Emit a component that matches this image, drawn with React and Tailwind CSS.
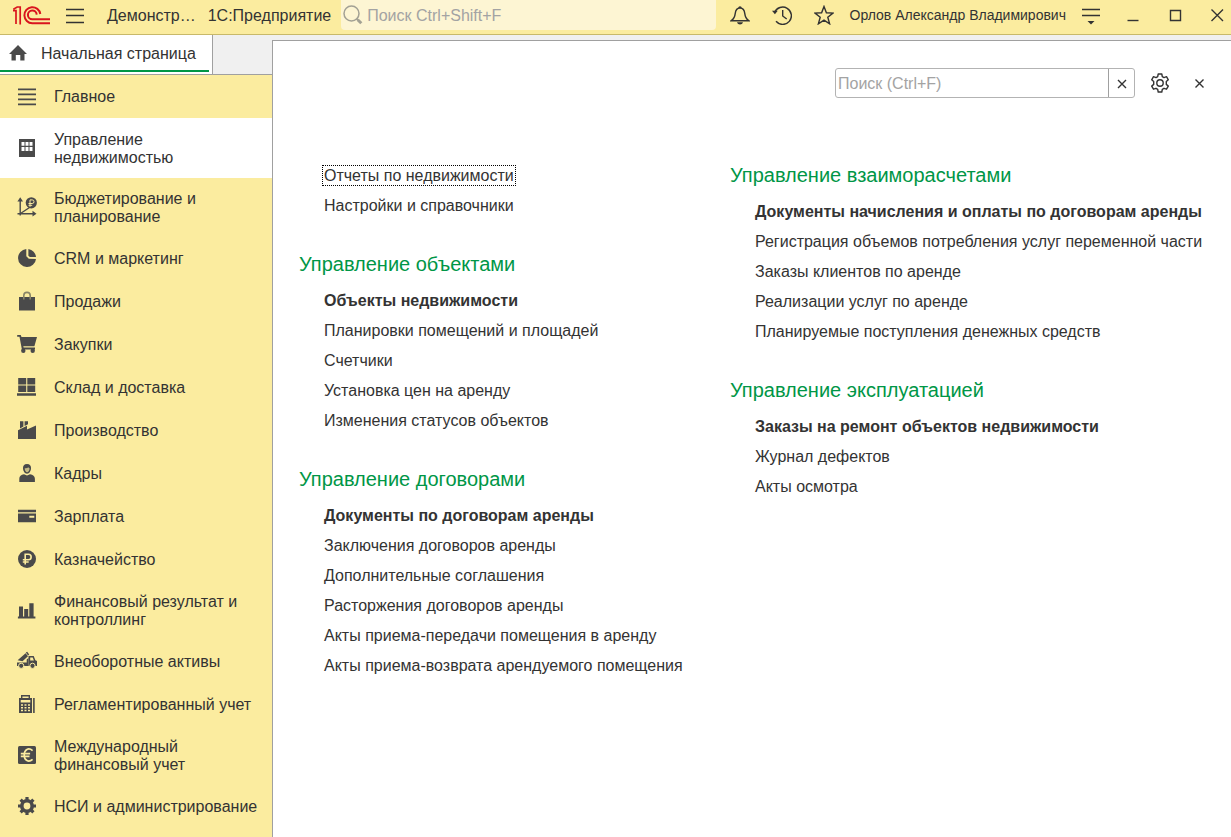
const ink = '#4a4a4a';

const icons = {
  main: (
    <path d="M1 2.5h18v1.8H1zM1 7.500h18v1.8H1zM1 12.500h18v1.8H1zM1 17.500h18v1.8H1z" />
  ),
  building: (
    <path
      fillRule="evenodd"
      d="M2 1h16v18H2zM4.500 4v3.800h3V4zM8.500 4v3.800h3V4zM12.500 4v3.800h3V4zM4.500 9v4h3V9zM8.500 9v4h3V9zM12.500 9v4h3V9z"
    />
  ),
  budget: (
    <>
      <path d="M3.2 18.5V2.5M.5 16.7h17M3.5 16.5l9-6" fill="none" stroke={ink} strokeWidth="1.4" />
      <path d="M.4 4.5 3.2.3 6 4.5zM15.5 13.8l4 2.9-4 2.9z" />
      <circle cx="14.3" cy="5.8" r="5.6" />
      <path d="M13 9.8V2.9h2.2a1.7 1.7 0 0 1 0 3.6h-3.7M11.5 8.3h3.7" fill="none" stroke="#fbec9f" />
    </>
  ),
  pie: (
    <>
      <path d="M9.3 1a9 9 0 1 0 9.7 9.900l-7.2-.1-2.5-2.5z" />
      <path d="M11.4.9A9 9 0 0 1 19 9.1h-6.2l-1.4-1.4z" />
    </>
  ),
  bag: (
    <>
      <path d="M2 6h16v13.5H2z" />
      <path d="M6.8 8.5V4.6a3.2 3.2 0 0 1 6.4 0v3.9" fill="none" stroke="#8a8567" strokeWidth="1.6" />
    </>
  ),
  cart: (
    <>
      <path d="M.2 1h3.500l.8 2h15.500l-2.600 9.300H6.300l.3 1.200H18v1.900H4.900L2.500 2.800H.2z" />
      <circle cx="6.3" cy="16.800" r="2.200" />
      <circle cx="15.7" cy="16.800" r="2.200" />
    </>
  ),
  stock: (
    <path d="M1.2 1h8v6.5h-8zM10.3 1h7.9v6.5h-7.9zM1.2 8.6h8v6.3h-8zM10.3 8.6h7.9v6.3h-7.9zM0 16.3h19v2.4H0z" />
  ),
  factory: (
    <path d="M3 1.2h3.4v5.3L3 8.4zM7.6 1.2H11v3L7.6 6zM1 10.2l9-4.5v3.9l9-4.2V19H1z" />
  ),
  person: (
    <>
      <path d="M10 .9c3 0 4 2 4 4.2 0 3-1.7 5.7-4 5.7S6 8.100 6 5.100C6 2.900 7 .9 10 .9z" />
      <path d="M7.700 5.300c1.800 0 3-.4 3.700-1.100.4.6.700.9 1.200 1.100 0 2.100-1.200 4-2.500 4S7.700 7.400 7.700 5.300z" fill="#c4ba83" />
      <path d="M2.300 19v-3.300c0-2.500 1.700-4 4.700-4.500l3 1.300 3-1.300c3 .5 4.900 2 4.900 4.500V19z" />
    </>
  ),
  card: (
    <path fillRule="evenodd" d="M1 3.800h18v2.500H1zM1 7.600h18v8.700H1zM12.300 9.800v1.900h5V9.800z" />
  ),
  ruble: (
    <>
      <circle cx="10" cy="10" r="9" />
      <path d="M8.200 15.500V5.200h3.200a2.700 2.700 0 0 1 0 5.500H5.800M5.800 13h5.900" fill="none" stroke="#fbec9f" strokeWidth="1.600" />
    </>
  ),
  bars: <path d="M2 6.500h4V17H2zM7.200 9h4v8h-4zM12.300 3.300h4.300V17h-4.300zM.9 16.600h17.500v1.800H.9z" />,
  truck: (
    <>
      <path d="M.6 9.200 8.600 2.200l2.400 3-5.500 5zM0 11.500h9.700V8.600L11.500 7v8H0z" />
      <path fillRule="evenodd" d="M11.500 5h5.200l1.700 4.200 1.600.8v5h-8.500zM13.200 6.400v3.200h3.700l-1.200-3.200z" />
      <path d="m8.800 1.600 1.400-.9 2 2.700-1.100 1.200z" />
      <circle cx="4.200" cy="14.800" r="2.600" stroke="#fbec9f" />
      <circle cx="15.500" cy="14.800" r="2.600" stroke="#fbec9f" />
    </>
  ),
  register: (
    <>
      <path fillRule="evenodd" d="M4 1h9v3h2v15H2V4h2zM5.400 2.400V4h6.200V2.400zM3.700 6v2.400h9.600V6zM4 10.200v1.500h2v-1.500zM7.500 10.200v1.500h2v-1.500zM11 10.200v1.500h2v-1.500zM4 13v1.500h2V13zM7.500 13v1.500h2V13zM11 13v1.500h2V13zM4 15.800v1.500h2v-1.500zM7.500 15.800v1.500h2v-1.500zM11 15.800v1.500h2v-1.500z" />
      <path d="M16.100 4h1.600v15h-1.600z" />
    </>
  ),
  euro: (
    <>
      <rect x="1" y="1" width="18" height="18" rx="1.500" />
      <path d="M15.600 5.600c-4-3.400-8.400-1.200-8.400 4.400s4.400 7.800 8.400 4.400M3.800 8.600h9.300M3.800 11.400h8.700" fill="none" stroke="#fbec9f" strokeWidth="1.700" />
    </>
  ),
  gear: (
    <>
      <circle cx="10" cy="10" r="5.200" fill="none" stroke={ink} strokeWidth="3.600" />
      <path
        d="M10 1v3M10 16v3M1 10h3M16 10h3M3.600 3.600l2.200 2.200M14.200 14.200l2.200 2.200M3.600 16.400l2.200-2.200M14.200 5.800l2.200-2.200"
        stroke={ink}
        strokeWidth="3.200"
      />
    </>
  ),
};

const sections = [
  { icon: 'main', title: 'Главное' },
  { icon: 'building', title: 'Управление недвижимостью', active: true },
  { icon: 'budget', title: 'Бюджетирование и планирование' },
  { icon: 'pie', title: 'CRM и маркетинг' },
  { icon: 'bag', title: 'Продажи' },
  { icon: 'cart', title: 'Закупки' },
  { icon: 'stock', title: 'Склад и доставка' },
  { icon: 'factory', title: 'Производство' },
  { icon: 'person', title: 'Кадры' },
  { icon: 'card', title: 'Зарплата' },
  { icon: 'ruble', title: 'Казначейство' },
  { icon: 'bars', title: 'Финансовый результат и контроллинг' },
  { icon: 'truck', title: 'Внеоборотные активы' },
  { icon: 'register', title: 'Регламентированный учет' },
  { icon: 'euro', title: 'Международный финансовый учет' },
  { icon: 'gear', title: 'НСИ и администрирование' },
];

const leftGroups = [
  {
    title: 'Управление объектами',
    items: [
      'Объекты недвижимости',
      'Планировки помещений и площадей',
      'Счетчики',
      'Установка цен на аренду',
      'Изменения статусов объектов',
    ],
  },
  {
    title: 'Управление договорами',
    items: [
      'Документы по договорам аренды',
      'Заключения договоров аренды',
      'Дополнительные соглашения',
      'Расторжения договоров аренды',
      'Акты приема-передачи помещения в аренду',
      'Акты приема-возврата арендуемого помещения',
    ],
  },
];

const rightGroups = [
  {
    title: 'Управление взаиморасчетами',
    items: [
      'Документы начисления и оплаты по договорам аренды',
      'Регистрация объемов потребления услуг переменной части',
      'Заказы клиентов по аренде',
      'Реализации услуг по аренде',
      'Планируемые поступления денежных средств',
    ],
  },
  {
    title: 'Управление эксплуатацией',
    items: ['Заказы на ремонт объектов недвижимости', 'Журнал дефектов', 'Акты осмотра'],
  },
];

function Logo() {
  return (
    <svg className="h-5 w-[38px] shrink-0" viewBox="0 0 38 20" fill="none" stroke="#d9141e" strokeWidth="2" aria-label="1С">
      <path d="M0 5.600h3V19M.3 4.200 4.200 2h3v17.400" strokeWidth="1.700" />
      <path d="M27.300 9A8 8 0 1 0 19.300 18.200H37" />
      <path d="M23.700 9.600a4.400 4.400 0 1 0-4.400 4.700H37" />
    </svg>
  );
}

function IconButton({ label, className, children }) {
  return (
    <button type="button" aria-label={label} className={`flex shrink-0 items-center justify-center ${className}`}>
      <svg width="20" height="20" viewBox="0 0 20 20" fill="none" stroke="#333333" strokeWidth="1.400">
        {children}
      </svg>
    </button>
  );
}

function TopBar() {
  return (
    <header className="flex h-[35px] items-start border-b border-[#c8b96a] bg-[#fbec9f] pl-[13px]">
      <div className="flex h-[30px] items-center">
        <Logo />
        <IconButton label="Главное меню" className="ml-[14px] w-5">
          <path d="M1 4.500h18M1 10.500h18M1 17.500h18" />
        </IconButton>
        <span className="ml-[22px] pt-0.5 whitespace-nowrap">Демонстр…</span>
        <span className="ml-3 pt-0.5 whitespace-nowrap">1С:Предприятие</span>
      </div>
      <label className="ml-[10px] flex h-[30px] min-w-0 flex-1 items-center rounded-b-sm bg-[#fdf5d3] pl-0.5">
        <svg width="20" height="20" viewBox="0 0 20 20" fill="none" stroke="#a3a194" aria-hidden="true">
          <circle cx="8.500" cy="8.500" r="7.500" strokeWidth="1.500" />
          <path d="m13.500 13.500 1.500 1.500" strokeWidth="1.800" />
          <path d="m14.700 14.700 3.600 3.600" strokeWidth="3" />
        </svg>
        <input
          type="text"
          aria-label="Глобальный поиск"
          placeholder="Поиск Ctrl+Shift+F"
          className="ml-1 min-w-0 flex-1 bg-transparent pt-0.5 outline-none placeholder:text-[#a3a3a3]"
        />
      </label>
      <div className="flex h-[30px] items-center pl-[14px]">
        <IconButton label="Уведомления" className="w-5">
          <path d="M1.300 15.700c2.600-1.700 3.500-3.400 3.900-7C5.600 5 7 3 10 3s4.400 2 4.800 5.700c.4 3.600 1.300 5.300 3.900 7z" />
          <path d="M9 3a1 1 0 0 1 2 0" />
          <path d="M7 17.300h6c-.6 1.700-1.600 2.200-3 2.200s-2.400-.5-3-2.200z" fill="#333333" stroke="none" />
        </IconButton>
        <IconButton label="История" className="ml-[22px] w-5">
          <path d="M2.600 7.500A8.700 8.700 0 1 1 4 16.300M10.700 5v6l4 3" />
          <path d="M0 5.800h5.800L2.900 9.300z" fill="#333333" stroke="none" />
        </IconButton>
        <IconButton label="Избранное" className="ml-[22px] w-5">
          <path d="m10 1.500 2.400 6.300 6.600.3-5.200 4.200 1.800 6.500-5.600-3.700-5.600 3.700 1.800-6.500L1 8.100l6.600-.3z" />
        </IconButton>
        <button type="button" className="ml-4 text-[14px] whitespace-nowrap">
          Орлов Александр Владимирович
        </button>
        <IconButton label="Сервис и настройки" className="ml-[15px] w-5">
          <path d="M1 4.500h18M1 10.500h18" />
          <path d="M6.500 16h7L10 19.500z" fill="#333333" stroke="none" />
        </IconButton>
        <IconButton label="Свернуть" className="ml-[22px] w-5">
          <path d="M4.500 15.500h11" />
        </IconButton>
        <IconButton label="Развернуть" className="ml-[22px] w-5">
          <path d="M5.500 5.500h10v10h-10z" />
        </IconButton>
        <IconButton label="Закрыть" className="mr-1 ml-[22px] w-5">
          <path d="m4.500 4.500 11.500 11.500M16 4.500 4.500 16" />
        </IconButton>
      </div>
    </header>
  );
}

function Sidebar() {
  return (
    <div className="flex w-[272px] shrink-0 flex-col">
      <div className="flex h-10 border-b border-[#a0a0a0]">
        <div className="w-[213px] border-r border-[#a0a0a0] bg-white pr-[3px]">
          <a href="#home" className="flex h-[37px] items-center border-b-2 border-[#009646] pl-[9px] whitespace-nowrap">
            <svg width="18" height="16" viewBox="0 0 18 16" fill={ink} aria-hidden="true">
              <path d="M9 0 18 9h-2.500v6.500h-4.200V10H6.800v5.500H2.500V9H0z" />
            </svg>
            <span className="ml-[14px] pt-[3px]">Начальная страница</span>
          </a>
        </div>
      </div>
      <nav className="flex flex-1 flex-col bg-[#fbec9f] leading-[18px]">
        {sections.map(s => (
          <a
            key={s.title}
            href={`#${s.icon}`}
            className={`flex min-h-[43px] items-center pr-3 pl-[17px] ${s.active ? 'bg-white py-[11px]' : 'pt-[10px] pb-[11px]'}`}
          >
            <svg width="20" height="20" viewBox="0 0 20 20" fill={ink} className="shrink-0" aria-hidden="true">
              {icons[s.icon]}
            </svg>
            <span className="mt-0.5 ml-[17px]">{s.title}</span>
          </a>
        ))}
      </nav>
    </div>
  );
}

function Group({ title, items }) {
  return (
    <section>
      <h2 className="pb-[10px] text-[20px] leading-6 text-[#009646]">{title}</h2>
      <ul className="pl-[25px]">
        {items.map((item, i) => (
          <li key={item} className={`leading-[30px] whitespace-nowrap ${i === 0 ? 'font-bold' : ''}`}>
            <a href="#item">{item}</a>
          </li>
        ))}
      </ul>
    </section>
  );
}

function SectionPanel() {
  return (
    <main className="mt-[5px] min-w-0 flex-1 border-t border-l border-[#a0a0a0] bg-white">
      <div className="flex items-center justify-end pt-[27px] pr-[21px]">
        <div className="flex h-[30px] w-[300px] rounded-[3px] border border-[#b3b3b3]">
          <input
            type="text"
            aria-label="Поиск по разделу"
            placeholder="Поиск (Ctrl+F)"
            className="min-w-0 flex-1 pt-0.5 pl-0.5 outline-none placeholder:text-[#a3a3a3]"
          />
          <IconButton label="Очистить" className="w-[26px] border-l border-[#a0a0a0]">
            <path d="m6 7 8 8M14 7l-8 8" />
          </IconButton>
        </div>
        <IconButton label="Настройка" className="ml-[15px] w-5">
          <path d="M8.200 1h3.600l.5 2.600 1.700 1 2.500-.9 1.800 3.100-2 1.700v2.900l2 1.700-1.800 3.100-2.500-.9-1.700 1-.5 2.700H8.200l-.5-2.700-1.700-1-2.500.9-1.800-3.100 2-1.700V8.500l-2-1.700 1.800-3.100 2.500.9 1.700-1z" strokeLinejoin="round" />
          <circle cx="10" cy="10" r="3.200" />
        </IconButton>
        <IconButton label="Закрыть раздел" className="ml-5 w-5">
          <path d="m5.500 6.500 8 8M13.500 6.500l-8 8" />
        </IconButton>
      </div>
      <div className="grid grid-cols-[431fr_501fr] pt-[62px] pl-[26px]">
        <div className="flex flex-col gap-[31px]">
          <ul className="pt-px pl-[25px] leading-[30px]">
            <li>
              <a href="#reports" className="outline-1 outline-offset-1 outline-black outline-dotted">
                Отчеты по недвижимости
              </a>
            </li>
            <li>
              <a href="#settings">Настройки и справочники</a>
            </li>
          </ul>
          {leftGroups.map(g => (
            <Group key={g.title} {...g} />
          ))}
        </div>
        <div className="flex flex-col gap-[31px] pt-[3px]">
          {rightGroups.map(g => (
            <Group key={g.title} {...g} />
          ))}
        </div>
      </div>
    </main>
  );
}

export default function App() {
  return (
    <div className="flex min-h-screen flex-col bg-[#f0f0f0] font-['Liberation_Sans',Arial,sans-serif] text-[16px] text-[#333333]">
      <TopBar />
      <div className="flex flex-1">
        <Sidebar />
        <SectionPanel />
      </div>
    </div>
  );
}
